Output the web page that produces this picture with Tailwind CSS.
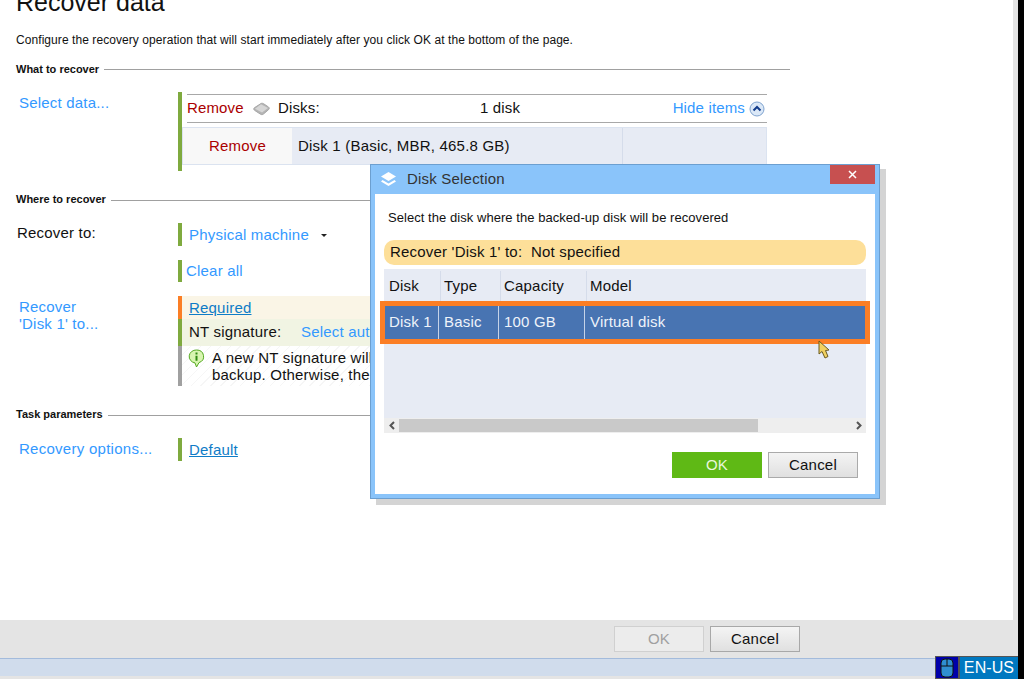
<!DOCTYPE html>
<html lang="en">
<head>
    <meta charset="UTF-8">
    <title>Recover data</title>
    <script src="https://cdn.jsdelivr.net/npm/@tailwindcss/browser@4"></script>
</head>
<body class="bg-black">
    <div class="relative w-[1024px] h-[679px] overflow-hidden bg-black font-['Liberation_Sans',sans-serif] text-[15px] tracking-[0.2px] text-[#111]">
        <div class="flex flex-col w-[1018px] h-[679px] bg-[#e4e4e4]">
            <!-- Main content -->
            <main class="w-[1013px] h-[620px] bg-white overflow-hidden pl-4">
                <h1 class="mt-[-16px] h-[38px] text-[25px] leading-[36px] tracking-normal">Recover data</h1>
                <p class="mt-[10px] h-[16px] text-[12px] leading-[16px] tracking-[0.07px]">Configure the recovery operation that will start immediately after you click OK at the bottom of the page.</p>

                <div class="mt-[15px] flex items-center w-[774px] h-[12px] gap-[5px]">
                    <span class="text-[11px] font-bold leading-[12px] tracking-normal">What to recover</span>
                    <span class="flex-1 h-px bg-[#a0a0a0] mt-[1px]"></span>
                </div>

                <div class="flex mt-[17px] h-[79px]">
                    <a class="w-[162px] pl-[3px] pt-[2px] text-[#3399ff] leading-[18px]">Select data...</a>
                    <div class="flex w-[589px] border-l-4 border-[#7faa3f]">
                        <div class="flex-1">
                            <div class="ml-[5px] mt-[2px] flex items-center h-[29px] border-y border-[#a8a8a8] w-[580px] tracking-[0.15px]">
                                <span class="w-[66px] text-[#aa0000]">Remove</span>
                                <svg class="w-[17px] h-[14px]" viewBox="0 0 17 14">
                                    <path d="M8 1.500C9 1 10 1.300 11 2L15.500 5C16.500 5.800 16.500 6.800 15.500 7.700L10.500 12C9.500 12.800 8.500 12.800 7.500 12.200L1.500 8.300C.7 7.800.5 6.500 1.300 5.800Z" fill="#b4b4b4" stroke="#a6a6a6"/>
                                    <path d="M8 2.300 15 6 9 10.500 2 6.800Z" fill="#d6d6d6"/>
                                </svg>
                                <span class="ml-[8px] w-[180px]">Disks:</span>
                                <span class="w-[84px] text-center">1 disk</span>
                                <span class="flex-1 flex justify-end items-center gap-[4px] pr-[2px] text-[#3399ff]">Hide items
                                    <svg class="w-[16px] h-[16px]" viewBox="0 0 16 16"><circle cx="8" cy="8" r="7" fill="#dbe8f7" stroke="#7fa3cf"/><path d="M4.500 9.500 8 6l3.500 3.500" fill="none" stroke="#123b8a" stroke-width="2"/></svg>
                                </span>
                            </div>
                            <div class="mt-[4px] flex h-[38px] w-[585px] border border-[#dbe3f0] bg-[#e7ebf4]">
                                <span class="w-[109px] bg-[#f8f8f8] text-[#aa0000] flex items-center justify-center">Remove</span>
                                <span class="w-[331px] pl-[6px] flex items-center border-r border-[#d5dcea]">Disk 1 (Basic, MBR, 465.8 GB)</span>
                            </div>
                        </div>
                    </div>
                </div>

                <div class="mt-[22px] flex items-center w-[774px] h-[12px] gap-[5px]">
                    <span class="text-[11px] font-bold leading-[12px] tracking-normal">Where to recover</span>
                    <span class="flex-1 h-px bg-[#a0a0a0] mt-[3px]"></span>
                </div>

                <div class="flex mt-[18px] h-[23px]">
                    <span class="w-[162px] pl-px pt-px leading-[18px]">Recover to:</span>
                    <div class="flex items-center border-l-4 border-[#7faa3f] pl-[7px] pt-[2px] text-[#3399ff]">
                        Physical machine
                        <span class="ml-[12px] border-x-[3px] border-t-[3px] border-x-transparent border-t-[#222]"></span>
                    </div>
                </div>
                <div class="ml-[162px] mt-[14px] h-[22px] flex items-center border-l-4 border-[#7faa3f] pl-[4px] text-[#3399ff]">Clear all</div>

                <div class="flex mt-[14px]">
                    <a class="w-[162px] pl-[3px] pt-[2px] leading-[17px] text-[#3399ff]">Recover<br>'Disk 1' to...</a>
                    <div class="w-[589px]">
                        <div class="h-[23px] flex items-center border-l-4 border-[#fb7e25] bg-[#faf5e6] pl-[7px] pt-[2px]"><span class="text-[#0f7cc7] underline">Required</span></div>
                        <div class="h-[27px] flex items-center border-l-4 border-[#7faa3f] bg-[#f1f4e3] pl-[7px]">
                            <span class="w-[112px]">NT signature:</span><span class="text-[#3399ff]">Select automatically</span>
                        </div>
                        <div class="flex h-[40px] border-l-4 border-[#a0a0a0] pl-[5px] pt-[3px] bg-[repeating-linear-gradient(135deg,#ffffff,#ffffff_6px,#f6f6f6_6px,#f6f6f6_7px)]">
                            <svg class="w-[19px] h-[19px] mr-[6px]" viewBox="0 0 19 19"><path d="M9.500 1a7 6.500 0 0 1 2.500 12.600L9.500 18 8 13.900A7 6.500 0 0 1 9.500 1Z" fill="#d8f5b0" stroke="#55aa22"/><path d="M9.500 3.500v2M9.500 6.800v5" stroke="#2f8a10" stroke-width="2"/></svg>
                            <p class="leading-[17px] whitespace-nowrap">A new NT signature will be generated for the disk in the<br>backup. Otherwise, the</p>
                        </div>
                    </div>
                </div>

                <div class="mt-[22px] flex items-center w-[774px] h-[12px] gap-[5px]">
                    <span class="text-[11px] font-bold leading-[12px] tracking-normal">Task parameters</span>
                    <span class="flex-1 h-px bg-[#a0a0a0] mt-[3px]"></span>
                </div>

                <div class="flex mt-[18px] h-[23px]">
                    <a class="w-[162px] pl-[3px] pt-px leading-[20px] tracking-[0.27px] text-[#3399ff]">Recovery options...</a>
                    <div class="flex items-center border-l-4 border-[#7faa3f] pl-[7px] pt-[2px]"><span class="text-[#0f7cc7] underline">Default</span></div>
                </div>
            </main>

            <!-- Footer buttons -->
            <div class="h-[38px] flex justify-end gap-[6px] pt-[6px] pr-[218px]">
                <button class="w-[90px] h-[26px] border border-[#d0d0d0] bg-[#ececec] text-[#a0a0a0]">OK</button>
                <button class="w-[90px] h-[26px] border border-[#a8a8a8] bg-gradient-to-b from-[#f4f4f4] to-[#e0e0e0]">Cancel</button>
            </div>
            <div class="h-[18px] bg-[#d0dcec] border-t border-[#a3bbdc]"></div>
        </div>

        <!-- Keyboard indicator -->
        <div class="absolute left-[935px] top-[656px] w-[24px] h-[23px] bg-[#0000aa] border border-[#555] flex items-center justify-center">
            <svg class="w-[14px] h-[20px]" viewBox="0 0 14 20"><rect x="1" y="1" width="12" height="18" rx="4" fill="#2f8fd0" stroke="#111"/><path d="M1 8h12M7 1v7" stroke="#111"/></svg>
        </div>
        <div class="absolute left-[959px] top-[656px] w-[59px] h-[23px] bg-[#0078c0] border-t border-l border-[#555] text-white flex items-center justify-center text-[16px] tracking-[0.1px]">EN-US</div>

        <!-- Dialog -->
        <div class="absolute left-[376px] top-[169px] w-[510px] h-[336px] bg-[#d4d4d4]"></div>
        <div class="absolute left-[370px] top-[164px] w-[510px] h-[335px] border border-[#6c9fd0] bg-[#8ac4fa] px-[4px] pb-[4px] flex flex-col">
            <div class="h-[29px] flex items-start shrink-0">
                <svg class="ml-[5px] mt-[6px] w-[17px] h-[17px]" viewBox="0 0 17 17"><path d="M8.500 1 16 5.500 8.500 10 1 5.500Z" fill="#fff"/><path d="M2.500 9 1 10.500 8.500 15 16 10.500 14.500 9 8.500 12.500Z" fill="#fff"/></svg>
                <span class="ml-[10px] mt-[5px] leading-[18px] text-[#333]">Disk Selection</span>
                <button class="ml-auto w-[45px] h-[19px] bg-[#c75050] text-white flex items-center justify-center">
                    <svg class="w-[9px] h-[9px]" viewBox="0 0 9 9"><path d="M1 1 8 8M8 1 1 8" stroke="#fff" stroke-width="1.500"/></svg>
                </button>
            </div>
            <div class="flex-1 bg-white px-[9px] relative">
                <p class="mt-[16px] ml-[4px] h-[16px] text-[13px] leading-[16px] tracking-[0.05px]">Select the disk where the backed-up disk will be recovered</p>
                <div class="mt-[14px] h-[25px] w-[482px] rounded-[10px] bg-[#fddf99] pl-[6px] flex items-center">Recover 'Disk 1' to:&nbsp; Not specified</div>
                <div class="mt-[4px] w-[482px] h-[164px] bg-[#e7ebf4] flex flex-col">
                    <div class="h-[32px] pt-[2px] flex shrink-0">
                        <span class="w-[57px] pl-[5px] flex items-center border-r border-[#d5dcea]">Disk</span>
                        <span class="w-[60px] pl-[3px] flex items-center border-r border-[#d5dcea]">Type</span>
                        <span class="w-[86px] pl-[3px] flex items-center border-r border-[#d5dcea]">Capacity</span>
                        <span class="pl-[3px] flex items-center">Model</span>
                    </div>
                    <div class="h-[43px] w-[490px] -ml-[4px] shrink-0 border-[5px] border-[#fb7e25] bg-[#4874b2] text-[#eef3fa] flex">
                        <span class="w-[54px] pl-[4px] flex items-center border-r border-[#c5d3e8]">Disk 1</span>
                        <span class="w-[60px] pl-[5px] flex items-center border-r border-[#c5d3e8]">Basic</span>
                        <span class="w-[86px] pl-[5px] flex items-center border-r border-[#c5d3e8]">100 GB</span>
                        <span class="pl-[5px] flex items-center">Virtual disk</span>
                    </div>
                    <div class="flex-1"></div>
                    <div class="h-[15px] bg-[#eeeeee] flex items-center shrink-0">
                        <span class="w-[15px] flex justify-center">
                            <svg class="w-[8px] h-[9px]" viewBox="0 0 8 9"><path d="M6 1 2.500 4.500 6 8" fill="none" stroke="#555" stroke-width="2"/></svg>
                        </span>
                        <span class="w-[359px] h-[13px] bg-[#c9c9c9]"></span>
                        <span class="flex-1"></span>
                        <span class="w-[15px] flex justify-center">
                            <svg class="w-[8px] h-[9px]" viewBox="0 0 8 9"><path d="M2 1 5.500 4.500 2 8" fill="none" stroke="#555" stroke-width="2"/></svg>
                        </span>
                    </div>
                </div>
                <div class="mt-[19px] w-[474px] flex justify-end gap-[6px]">
                    <button class="w-[90px] h-[26px] bg-[#5fb915] text-[#e9f7dc]">OK</button>
                    <button class="w-[90px] h-[26px] border border-[#aaa] bg-gradient-to-b from-[#f4f4f4] to-[#e0e0e0]">Cancel</button>
                </div>
            </div>
        </div>

        <!-- Mouse cursor -->
        <svg class="absolute left-[817px] top-[340px] w-[15px] h-[20px]" viewBox="0 0 15 20"><path d="M2 1 2 14 5 11.500 8 18 11 16.500 8.500 10.500 12 10Z" fill="#f0d060" stroke="#6b5a20"/></svg>
    </div>
</body>
</html>
